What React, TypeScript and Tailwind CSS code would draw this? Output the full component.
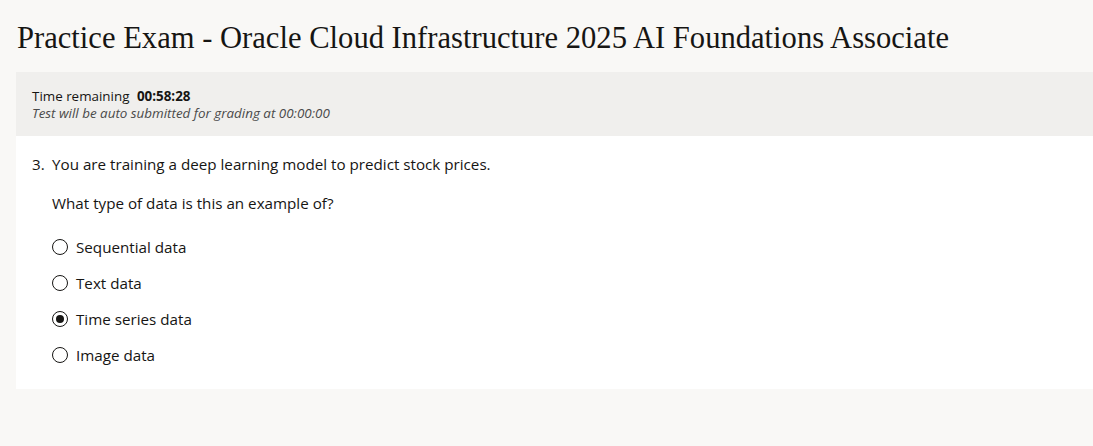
const options = ["Sequential data", "Text data", "Time series data", "Image data"];

function Radio({ checked }: { checked: boolean }) {
  return (
    <span className="flex h-[16px] w-[16px] shrink-0 items-center justify-center rounded-full border-[1.5px] border-[#161513] bg-white">
      {checked && <span className="h-[8px] w-[8px] rounded-full bg-[#161513]" />}
    </span>
  );
}

export default function App() {
  return (
    <div className="min-h-[446px] bg-[#f9f8f6] pl-4 text-[#161513] [font-family:'Open_Sans',sans-serif]">
      <h1 className="whitespace-nowrap pt-[18px] pb-[13px] pl-[1px] text-[30.6px] leading-[41px] text-[#161513] [font-family:'Liberation_Serif',serif]">
        Practice Exam - Oracle Cloud Infrastructure 2025 AI Foundations Associate
      </h1>
      <div className="h-[64px] bg-[#f0efed] pl-4 pt-[16px] text-[13.4px] leading-[17px]">
        <div>
          Time remaining <span className="ml-1 font-bold">00:58:28</span>
        </div>
        <div className="italic text-[#4a4a4a]">Test will be auto submitted for grading at 00:00:00</div>
      </div>
      <div className="bg-white pl-4 pt-[18px] pb-[24px] text-[15.2px] leading-[20px]">
        <div className="flex">
          <span className="w-5">3.</span>
          <div>
            <p>You are training a deep learning model to predict stock prices.</p>
            <p className="mt-[19px]">What type of data is this an example of?</p>
            <div className="mt-[24px] flex flex-col gap-[16px]">
              {options.map((o, i) => (
                <label key={o} className="flex items-center gap-[8px]">
                  <Radio checked={i === 2} />
                  <span>{o}</span>
                </label>
              ))}
            </div>
          </div>
        </div>
      </div>
    </div>
  );
}
